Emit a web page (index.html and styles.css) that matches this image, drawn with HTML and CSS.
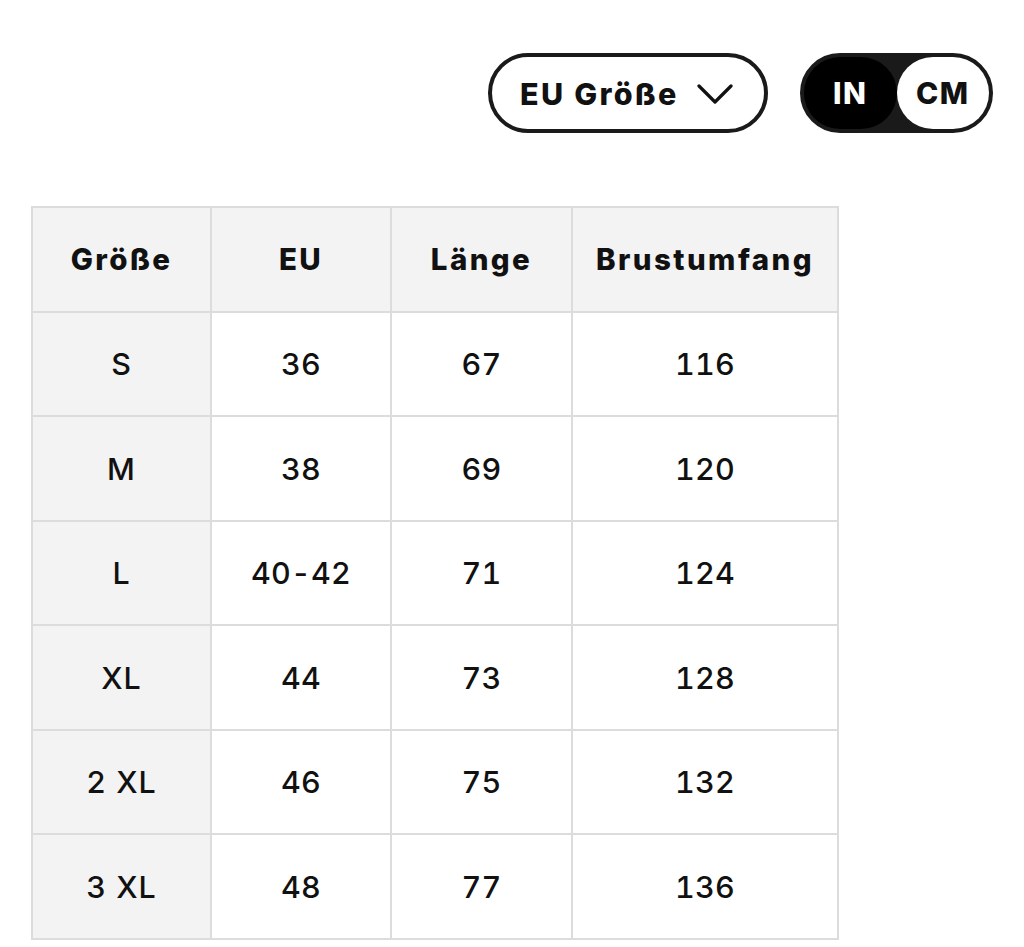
FILE: index.html
```html
<!DOCTYPE html>
<html lang="de">
<head>
<meta charset="utf-8">
<title>Größentabelle</title>
<link rel="stylesheet" href="styles.css">
</head>
<body>
<div class="controls">
  <button class="select">
    <span>EU Größe</span>
    <svg class="chev" width="36" height="22" viewBox="0 0 36 22"><path d="M2 3 L18 19 L34 3" fill="none" stroke="#111" stroke-width="3.2" stroke-linecap="round" stroke-linejoin="round"/></svg>
  </button>
  <div class="toggle">
    <span class="opt active">IN</span>
    <span class="opt">CM</span>
  </div>
</div>
<table class="sizes">
  <thead>
    <tr><th>Größe</th><th>EU</th><th>Länge</th><th>Brustumfang</th></tr>
  </thead>
  <tbody>
    <tr><th>S</th><td>36</td><td>67</td><td>116</td></tr>
    <tr><th>M</th><td>38</td><td>69</td><td>120</td></tr>
    <tr><th>L</th><td>40-42</td><td>71</td><td>124</td></tr>
    <tr><th>XL</th><td>44</td><td>73</td><td>128</td></tr>
    <tr><th>2 XL</th><td>46</td><td>75</td><td>132</td></tr>
    <tr><th>3 XL</th><td>48</td><td>77</td><td>136</td></tr>
  </tbody>
</table>
</body>
</html>
```
FILE: styles.css
```css
* { box-sizing: border-box; }
body {
  margin: 0;
  background: #fff;
  font-family: Inter, "Noto Sans", sans-serif;
  color: #111;
}
.controls {
  display: flex;
  justify-content: flex-end;
  align-items: center;
  gap: 32px;
  padding: 53px 31px 0 0;
}
.select {
  width: 280px;
  height: 80px;
  border: 4px solid #1a1a1a;
  border-radius: 40px;
  background: #fff;
  display: flex;
  align-items: center;
  gap: 18px;
  padding: 0 0 0 28px;
  font-family: inherit;
  font-size: 30.5px;
  font-weight: 800;
  letter-spacing: 2.3px;
  color: #111;
}
.chev { margin-top: 2px; }
.toggle {
  width: 193px;
  height: 80px;
  border: 4px solid #1a1a1a;
  background: #1a1a1a;
  border-radius: 40px;
  display: flex;
}
.opt {
  flex: 1;
  display: flex;
  align-items: center;
  justify-content: center;
  border-radius: 36px;
  background: #fff;
  font-size: 30px;
  font-weight: 800;
  letter-spacing: 1.5px;
  color: #111;
}
.opt.active {
  background: #000;
  color: #fff;
}
.sizes {
  margin: 73px 0 0 31px;
  width: 808px;
  border-collapse: collapse;
  table-layout: fixed;
}
.sizes th, .sizes td {
  border: 2px solid #dcdcdc;
  height: 104.5px;
  text-align: center;
  vertical-align: middle;
  font-size: 30.5px;
  color: #111;
  padding: 0;
  font-variant-numeric: tabular-nums;
}
.sizes thead th {
  background: #f3f3f3;
  font-size: 29.5px;
  font-weight: 800;
  letter-spacing: 2.4px;
}
.sizes tbody th {
  background: #f3f3f3;
  font-weight: 500;
  letter-spacing: 1px;
}
.sizes td {
  font-weight: 500;
  letter-spacing: 0.2px;
}
.sizes th:nth-child(1) { width: 179px; }
.sizes th:nth-child(2) { width: 180px; }
.sizes th:nth-child(3) { width: 181px; }
```
